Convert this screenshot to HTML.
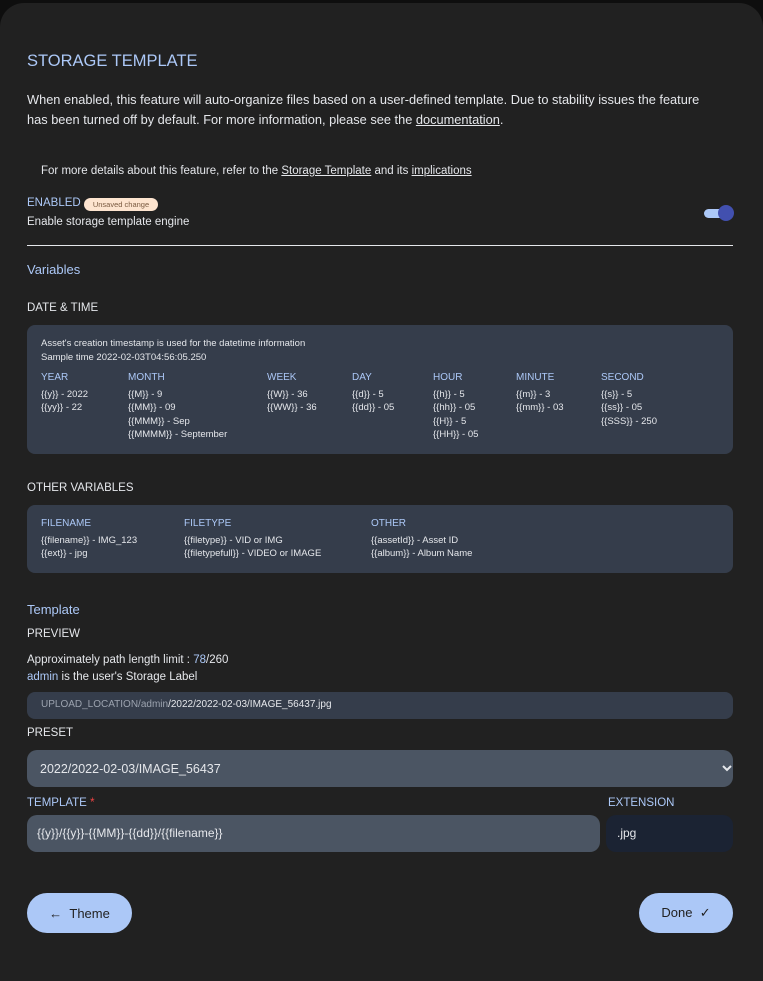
<!DOCTYPE html>
<html><head><meta charset="utf-8"><style>
*{box-sizing:border-box;margin:0;padding:0}
html,body{width:763px;height:981px;overflow:hidden}
body{background:#0e0e0e;font-family:"Liberation Sans",sans-serif;color:#e5e7eb;position:relative}
.card{position:absolute;left:0;top:3px;width:763px;height:978px;background:#212121;border-radius:24px 24px 0 0}
.abs{position:absolute}
.blue{color:#acc8f7}
.box{position:absolute;left:27px;width:706px;background:#353d4b;border-radius:8px}
.hd{font-size:10px;color:#acc8f7;margin-bottom:3px}
.col{position:absolute;font-size:9.5px;line-height:13.5px;color:#e5e7eb}
u{text-decoration:underline}
.btn{position:absolute;top:893px;height:40px;background:#acc8f7;border-radius:20px;color:#222;font-size:13px;display:flex;align-items:center;justify-content:center}
</style></head><body>
<div class="card"></div>
<div class="abs blue" style="left:27px;top:52px;font-size:16.5px">STORAGE TEMPLATE</div>
<div class="abs" style="left:27px;top:90px;width:680px;font-size:12.8px;line-height:20px">When enabled, this feature will auto-organize files based on a user-defined template. Due to stability issues the feature has been turned off by default. For more information, please see the <u>documentation</u>.</div>
<div class="abs" style="left:41px;top:165px;font-size:11.5px">For more details about this feature, refer to the <u>Storage Template</u> and its <u>implications</u></div>
<div class="abs blue" style="left:27px;top:197px;font-size:11.5px">ENABLED</div>
<div class="abs" style="left:84px;top:198px;width:74px;height:13px;border-radius:7px;background:#fde4cf;color:#7a5a40;font-size:7.5px;line-height:13px;text-align:center">Unsaved change</div>
<div class="abs" style="left:27px;top:216px;font-size:11.5px">Enable storage template engine</div>
<div class="abs" style="left:704px;top:209px;width:26px;height:9px;border-radius:5px;background:#acc8f7"></div>
<div class="abs" style="left:718px;top:205px;width:16px;height:16px;border-radius:8px;background:#4250af"></div>
<div class="abs" style="left:27px;top:245px;width:706px;height:1px;background:#e5e7eb"></div>
<div class="abs blue" style="left:27px;top:262px;font-size:13px">Variables</div>
<div class="abs" style="left:27px;top:302px;font-size:11.5px">DATE &amp; TIME</div>
<div class="box" style="top:325px;height:129px"></div>
<div class="abs" style="left:41px;top:337px;font-size:9.5px;line-height:14px">Asset's creation timestamp is used for the datetime information<br>Sample time 2022-02-03T04:56:05.250</div>
<div class="col" style="left:41px;top:371px"><div class="hd">YEAR</div>{{y}} - 2022<br>{{yy}} - 22</div>
<div class="col" style="left:128px;top:371px"><div class="hd">MONTH</div>{{M}} - 9<br>{{MM}} - 09<br>{{MMM}} - Sep<br>{{MMMM}} - September</div>
<div class="col" style="left:267px;top:371px"><div class="hd">WEEK</div>{{W}} - 36<br>{{WW}} - 36</div>
<div class="col" style="left:352px;top:371px"><div class="hd">DAY</div>{{d}} - 5<br>{{dd}} - 05</div>
<div class="col" style="left:433px;top:371px"><div class="hd">HOUR</div>{{h}} - 5<br>{{hh}} - 05<br>{{H}} - 5<br>{{HH}} - 05</div>
<div class="col" style="left:516px;top:371px"><div class="hd">MINUTE</div>{{m}} - 3<br>{{mm}} - 03</div>
<div class="col" style="left:601px;top:371px"><div class="hd">SECOND</div>{{s}} - 5<br>{{ss}} - 05<br>{{SSS}} - 250</div>
<div class="abs" style="left:27px;top:482px;font-size:11.5px">OTHER VARIABLES</div>
<div class="box" style="top:505px;height:68px"></div>
<div class="col" style="left:41px;top:517px"><div class="hd">FILENAME</div>{{filename}} - IMG_123<br>{{ext}} - jpg</div>
<div class="col" style="left:184px;top:517px"><div class="hd">FILETYPE</div>{{filetype}} - VID or IMG<br>{{filetypefull}} - VIDEO or IMAGE</div>
<div class="col" style="left:371px;top:517px"><div class="hd">OTHER</div>{{assetId}} - Asset ID<br>{{album}} - Album Name</div>
<div class="abs blue" style="left:27px;top:602px;font-size:13px">Template</div>
<div class="abs" style="left:27px;top:628px;font-size:11.5px">PREVIEW</div>
<div class="abs" style="left:27px;top:652px;font-size:11.5px;line-height:17px">Approximately path length limit : <span class="blue">78</span>/260<br><span class="blue">admin</span> is the user's Storage Label</div>
<div class="box" style="top:692px;height:27px"></div>
<div class="abs" style="left:41px;top:699px;font-size:10px"><span style="color:#9ca3af">UPLOAD_LOCATION/admin</span>/2022/2022-02-03/IMAGE_56437.jpg</div>
<div class="abs" style="left:27px;top:727px;font-size:11.5px">PRESET</div>
<div class="box" style="top:750px;height:37px;background:#4b5563;border-radius:10px"></div>
<div class="abs" style="left:40px;top:762px;font-size:12.5px">2022/2022-02-03/IMAGE_56437</div>
<svg class="abs" style="left:722px;top:764px" width="10" height="8" viewBox="0 0 10 8"><path d="M1 2l4 4 4-4" stroke="#e5e7eb" stroke-width="2" fill="none"/></svg>
<div class="abs blue" style="left:27px;top:797px;font-size:11.5px">TEMPLATE <span style="color:#ef4444">*</span></div>
<div class="abs blue" style="left:608px;top:797px;font-size:11.5px">EXTENSION</div>
<div class="abs" style="left:27px;top:815px;width:573px;height:37px;background:#4b5563;border-radius:10px"></div>
<div class="abs" style="left:37px;top:826px;font-size:12px">{{y}}/{{y}}-{{MM}}-{{dd}}/{{filename}}</div>
<div class="abs" style="left:606px;top:815px;width:127px;height:37px;background:#1b2333;border-radius:10px"></div>
<div class="abs" style="left:617px;top:826px;font-size:12px">.jpg</div>
<div class="btn" style="left:27px;width:105px">&#8592;&nbsp;&nbsp;Theme</div>
<div class="btn" style="left:639px;width:94px">Done&nbsp;&nbsp;&#10003;</div>
</body></html>
